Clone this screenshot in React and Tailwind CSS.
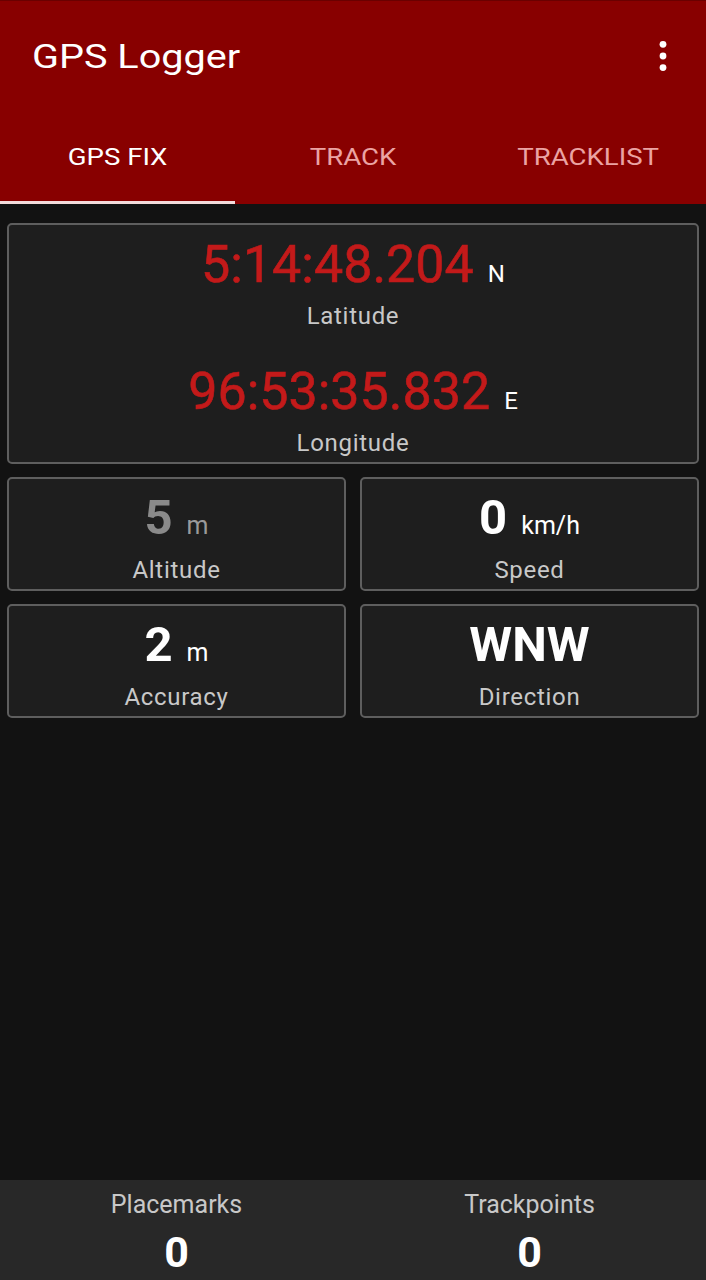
import { useState } from "react";

const tabs = ["GPS FIX", "TRACK", "TRACKLIST"];

const Kebab = () => (
  <svg width="10" height="32" viewBox="0 0 10 32" className="block">
    <circle cx="5" cy="4.3" r="3.4" fill="#fff" />
    <circle cx="5" cy="16" r="3.4" fill="#fff" />
    <circle cx="5" cy="27.6" r="3.4" fill="#fff" />
  </svg>
);

// small tile with value + unit + caption
const Tile = ({ value, unit, label, dim }) => (
  <div className="flex flex-col items-center h-[114px] pt-[11px] rounded-[5px] border-2 border-[#5e5e5e] bg-[#1e1e1e]">
    <div className="flex items-baseline gap-[14px]">
      <span
        className={`text-[49px] leading-[56px] font-bold ${dim ? "text-[#8a8a8a]" : "text-white"}`}
      >
        {value}
      </span>
      {unit && (
        <span className={`text-[25px] leading-[28px] ${dim ? "text-[#9a9a9a]" : "text-white"}`}>
          {unit}
        </span>
      )}
    </div>
    <div className="mt-[10px] text-[24px] leading-[28px] tracking-[0.7px] text-[#c8c8c8]">{label}</div>
  </div>
);

const Coord = ({ value, hemi, label, top }) => (
  <div className={`flex flex-col items-center ${top}`}>
    <div className="flex items-baseline gap-[14px]">
      <span className="text-[52px] leading-[60px] text-[#c31a1a] [-webkit-text-stroke:0.6px_#c31a1a]">
        {value}
      </span>
      <span className="text-[24px] leading-[28px] text-white">{hemi}</span>
    </div>
    <div className="mt-[7px] text-[24px] leading-[28px] tracking-[0.7px] text-[#c8c8c8]">{label}</div>
  </div>
);

export default function App() {
  const [active, setActive] = useState(0);

  return (
    <div className="h-screen flex flex-col bg-[#121212] font-['Roboto','Liberation_Sans',sans-serif]">
      {/* app bar + tabs */}
      <header className="bg-[#880000] border-t border-[#6a0000]">
        <div className="h-[110px] flex items-center justify-between pl-[32px] pr-[38px]">
          <h1 className="inline-block origin-left scale-x-[1.165] text-[34px] leading-[40px] text-white">
            GPS Logger
          </h1>
          <Kebab />
        </div>
        <div className="grid grid-cols-3 h-[93px]">
          {tabs.map((t, i) => (
            <button
              key={t}
              onClick={() => setActive(i)}
              className={`relative flex items-center justify-center text-[23px] leading-[28px] ${
                i === active ? "text-white" : "text-[#eba3a3]"
              }`}
            >
              <span className="inline-block scale-x-[1.2]">{t}</span>
              {i === active && (
                <span className="absolute left-0 right-0 bottom-0 h-[3px] bg-[#f3dcdc]" />
              )}
            </button>
          ))}
        </div>
      </header>

      {/* gps fix */}
      <main className="flex-1 px-[7px] pt-[19px] flex flex-col gap-[13px]">
        <div className="h-[241px] pt-[10px] rounded-[5px] border-2 border-[#5e5e5e] bg-[#1e1e1e]">
          <Coord value="5:14:48.204" hemi="N" label="Latitude" top="" />
          <Coord value="96:53:35.832" hemi="E" label="Longitude" top="mt-[32px]" />
        </div>
        <div className="grid grid-cols-2 gap-x-[14px] gap-y-[13px]">
          <Tile value="5" unit="m" label="Altitude" dim />
          <Tile value="0" unit="km/h" label="Speed" />
          <Tile value="2" unit="m" label="Accuracy" />
          <Tile value="WNW" label="Direction" />
        </div>
      </main>

      {/* counters */}
      <footer className="h-[100px] bg-[#282828] grid grid-cols-2 pt-[11px]">
        {[
          ["Placemarks", 0],
          ["Trackpoints", 0],
        ].map(([label, n]) => (
          <div key={label} className="flex flex-col items-center">
            <div className="text-[25px] leading-[28px] text-[#c8c8c8]">{label}</div>
            <div className="mt-[11px] text-[43px] leading-[44px] font-bold text-white">{n}</div>
          </div>
        ))}
      </footer>
    </div>
  );
}
